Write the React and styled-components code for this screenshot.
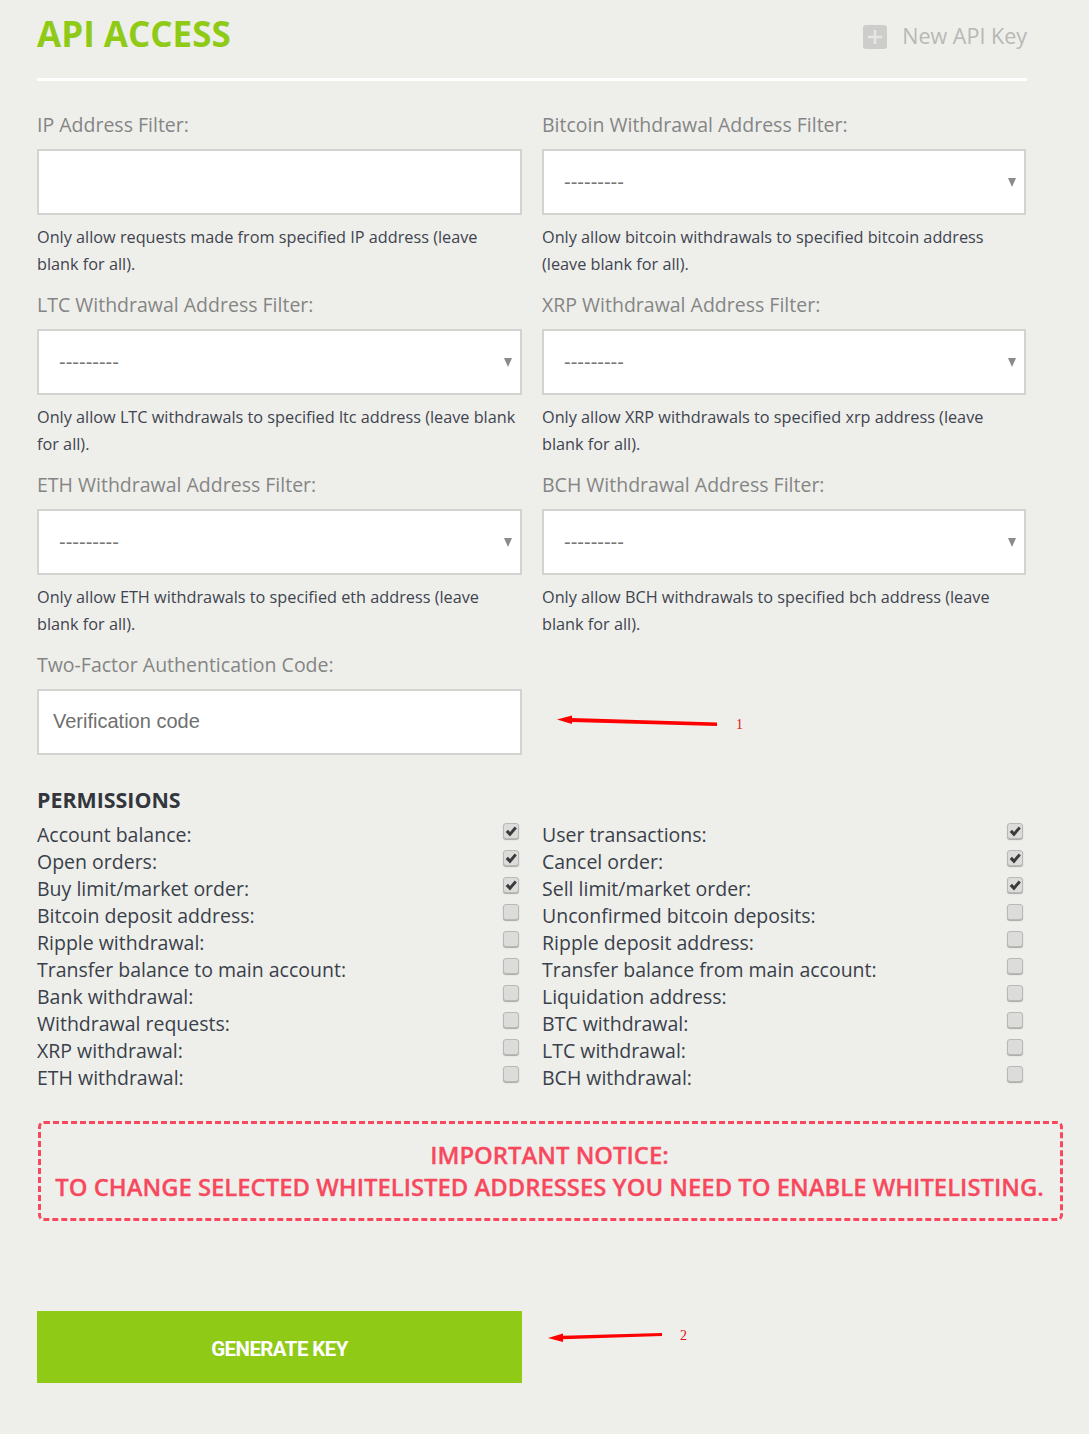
import React from "react";
import styled, { createGlobalStyle } from "styled-components";

const Global = createGlobalStyle`
  html, body { margin: 0; padding: 0; background: #eeefea; }
  body { font-family: "Open Sans", sans-serif; color: #3a3f4a; }
  * { box-sizing: border-box; }
`;
const Page = styled.div`
  width: 1089px; height: 1434px; overflow: hidden; padding: 0 0 0 37px;
`;
const Header = styled.header`
  width: 990px; height: 81px; border-bottom: 3px solid #fff;
  display: flex; justify-content: space-between; align-items: flex-start;
`;
const Title = styled.h1`
  margin: 11px 0 0; font-size: 35px; line-height: 46px; font-weight: 700; color: #8fca16;
`;
const NewKey = styled.a`
  display: flex; align-items: center; gap: 15px; margin-top: 19px;
  font-size: 21.5px; line-height: 33px; color: #b8b8b6;
`;
const PlusBox = styled.span`
  width: 24px; height: 24px; margin-top: 3px; border-radius: 3px; background: #cdcdcb;
  display: flex; align-items: center; justify-content: center;
`;
const FilterGrid = styled.div`
  display: grid; grid-template-columns: 485px 484px; column-gap: 20px; padding-top: 27px;
`;
const Field = styled.div`
  height: 180px;
`;
const Label = styled.label`
  display: block; font-size: 19.5px; line-height: 34px; height: 41px; color: #858585;
`;
const InputBox = styled.div`
  height: 66px; border: 2px solid #d3d3d2; background: #fff; display: flex; align-items: center;
  padding: 0 14px 2px;
  font-family: "Liberation Sans", Arial, sans-serif; font-size: 20px; color: #6f6f6f;
`;
const SelectBox = styled(InputBox)`
  justify-content: space-between; padding: 0 8px 0 20px;
  color: #777;
`;
const Caret = styled.span`
  width: 0; height: 0; border-left: 4.5px solid transparent; border-right: 4.5px solid transparent;
  border-top: 9px solid #8b8b8b;
`;
const Help = styled.p`
  margin: 9px 0 0; font-size: 16.25px; line-height: 27px; color: #3f4450;
`;
const Annotated = styled.div`
  height: 66px; display: flex; align-items: flex-start; color: #e8100f;
  font-family: "Liberation Serif", serif; font-size: 14px;
`;
const Note = styled.span`
  display: block; line-height: 16px; margin-left: ${(p) => p.$left}px; margin-top: ${(p) => p.$top}px;
`;
const Permissions = styled.section`
  width: 990px; margin-top: -44px;
`;
const SectionTitle = styled.h2`
  margin: 0; font-size: 21.4px; line-height: 32px; height: 37px; font-weight: 700; color: #33363d;
`;
const PermGrid = styled.div`
  display: grid; grid-template-columns: 485px 484px; column-gap: 20px;
`;
const PermRow = styled.div`
  height: 27px; display: flex; align-items: center; justify-content: space-between;
  font-size: 19.5px; line-height: 27px; color: #3a3f4a; padding-right: 3px;
`;
const CheckBox = styled.span`
  width: 16px; height: 16px; margin-top: -7px; border-radius: 3px; background: #dcdcda;
  border: 1px solid #b9b9b7; box-shadow: 0 1px 1px #a8a8a6;
  display: flex; align-items: center; justify-content: center;
`;
const Notice = styled.div`
  width: 1025px; height: 100px; margin: 30px 0 0 1px; border: 3px dashed #f8485e; border-radius: 6px;
  text-align: center; font-size: 23.85px; font-weight: 600; line-height: 32px; color: #f8485e;
  padding: 15px 2px 0 0; white-space: nowrap; -webkit-text-stroke: 0.3px #f8485e;
`;
const Footer = styled.div`
  display: flex; align-items: flex-start; margin-top: 90px;
`;
const Generate = styled.button`
  width: 485px; height: 72px; border: 0; background: #8fca16; color: #fff;
  font-family: Roboto, sans-serif; font-size: 20.5px; font-weight: 700; letter-spacing: -0.6px;
  padding: 4px 0 0;
`;

const filters = [
  ["IP Address Filter:", "input", "Only allow requests made from specified IP address (leave blank for all)."],
  ["Bitcoin Withdrawal Address Filter:", "select", "Only allow bitcoin withdrawals to specified bitcoin address (leave blank for all)."],
  ["LTC Withdrawal Address Filter:", "select", "Only allow LTC withdrawals to specified ltc address (leave blank for all)."],
  ["XRP Withdrawal Address Filter:", "select", "Only allow XRP withdrawals to specified xrp address (leave blank for all)."],
  ["ETH Withdrawal Address Filter:", "select", "Only allow ETH withdrawals to specified eth address (leave blank for all)."],
  ["BCH Withdrawal Address Filter:", "select", "Only allow BCH withdrawals to specified bch address (leave blank for all)."],
];
const perms = [
  ["Account balance:", 1], ["User transactions:", 1],
  ["Open orders:", 1], ["Cancel order:", 1],
  ["Buy limit/market order:", 1], ["Sell limit/market order:", 1],
  ["Bitcoin deposit address:", 0], ["Unconfirmed bitcoin deposits:", 0],
  ["Ripple withdrawal:", 0], ["Ripple deposit address:", 0],
  ["Transfer balance to main account:", 0], ["Transfer balance from main account:", 0],
  ["Bank withdrawal:", 0], ["Liquidation address:", 0],
  ["Withdrawal requests:", 0], ["BTC withdrawal:", 0],
  ["XRP withdrawal:", 0], ["LTC withdrawal:", 0],
  ["ETH withdrawal:", 0], ["BCH withdrawal:", 0],
];

const Arrow = ({ w, h, d }) => (
  <svg width={w} height={h} viewBox={`0 0 ${w} ${h}`} style={{ flex: "none" }}>
    <path d={d} fill="#f00" />
  </svg>
);

export default function App() {
  return (
    <Page>
      <Global />
      <Header>
        <Title>API ACCESS</Title>
        <NewKey>
          <PlusBox>
            <svg width="14" height="14" viewBox="0 0 14 14"><path d="M5.7 0h2.6v5.7H14v2.6H8.3V14H5.7V8.3H0V5.7h5.7z" fill="#e6e6e4" /></svg>
          </PlusBox>
          New API Key
        </NewKey>
      </Header>
      <FilterGrid>
        {filters.map(([l, t, h]) => (
          <Field key={l}>
            <Label>{l}</Label>
            {t === "input" ? <InputBox /> : <SelectBox>---------<Caret /></SelectBox>}
            <Help>{h}</Help>
          </Field>
        ))}
        <Field>
          <Label>Two-Factor Authentication Code:</Label>
          <InputBox>Verification code</InputBox>
        </Field>
        <Field>
          <Label as="div" />
          <Annotated>
            <Arrow w={190} h={40} d="M15 30.5 L30 26.5 L30 29 L175 33.5 L175 37 L30 33 L30 35 Z" />
            <Note $left={4} $top={28}>1</Note>
          </Annotated>
        </Field>
      </FilterGrid>
      <Permissions>
        <SectionTitle>PERMISSIONS</SectionTitle>
        <PermGrid>
          {perms.map(([l, c]) => (
            <PermRow key={l}>
              {l}
              <CheckBox>
                {c ? (
                  <svg width="12" height="11" viewBox="0 0 12 11"><path d="M.7 6 L3 3.7 L5 6 L9.7 .5 L11.8 2.4 L5 10.5 Z" fill="#3b3b3b" /></svg>
                ) : null}
              </CheckBox>
            </PermRow>
          ))}
        </PermGrid>
      </Permissions>
      <Notice>
        IMPORTANT NOTICE:
        <br />
        TO CHANGE SELECTED WHITELISTED ADDRESSES YOU NEED TO ENABLE WHITELISTING.
      </Notice>
      <Footer>
        <Generate>GENERATE KEY</Generate>
        <Annotated>
          <Arrow w={150} h={40} d="M26 27 L41 22.5 L41 24.7 L140 22 L140 25 L41 28.2 L41 31 Z" />
          <Note $left={8} $top={17}>2</Note>
        </Annotated>
      </Footer>
    </Page>
  );
}
